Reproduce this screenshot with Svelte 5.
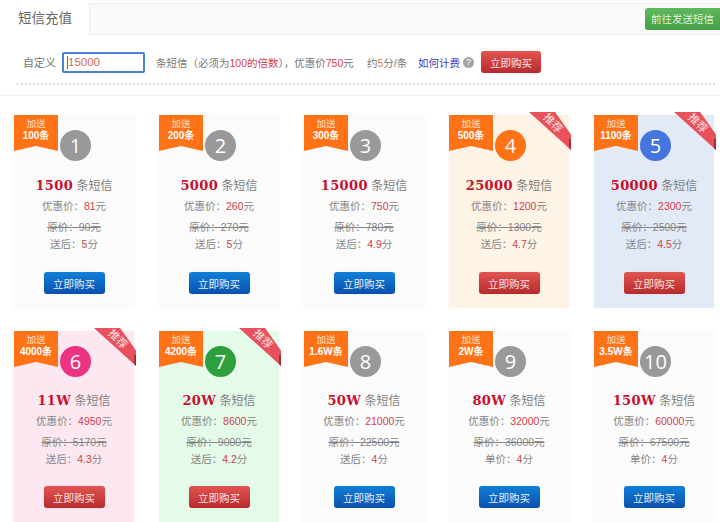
<script>
  const plans = [
    { no: 1, bonus: '100条', count: '1500', price: '81', old: '90', last: '送后', rate: '5', tone: 'plain' },
    { no: 2, bonus: '200条', count: '5000', price: '260', old: '270', last: '送后', rate: '5', tone: 'plain' },
    { no: 3, bonus: '300条', count: '15000', price: '750', old: '780', last: '送后', rate: '4.9', tone: 'plain' },
    { no: 4, bonus: '500条', count: '25000', price: '1200', old: '1300', last: '送后', rate: '4.7', tone: 'cream', hot: true },
    { no: 5, bonus: '1100条', count: '50000', price: '2300', old: '2500', last: '送后', rate: '4.5', tone: 'sky', hot: true },
    { no: 6, bonus: '4000条', count: '11W', price: '4950', old: '5170', last: '送后', rate: '4.3', tone: 'pink', hot: true },
    { no: 7, bonus: '4200条', count: '20W', price: '8600', old: '9000', last: '送后', rate: '4.2', tone: 'mint', hot: true },
    { no: 8, bonus: '1.6W条', count: '50W', price: '21000', old: '22500', last: '送后', rate: '4', tone: 'plain' },
    { no: 9, bonus: '2W条', count: '80W', price: '32000', old: '36000', last: '单价', rate: '4', tone: 'plain' },
    { no: 10, bonus: '3.5W条', count: '150W', price: '60000', old: '67500', last: '单价', rate: '4', tone: 'plain' }
  ];
</script>

<div class="page">
  <div class="tabs">
    <div class="tab">短信充值</div>
    <a class="send" href="#send">前往发送短信</a>
  </div>

  <div class="custom">
    <span class="label">自定义</span>
    <div class="input"><i class="caret"></i>15000</div>
    <span class="desc">条短信（必须为<em>100的倍数</em>），优惠价<em>750</em>元</span>
    <span class="unit">约<em class="orange">5</em>分/条</span>
    <a class="how" href="#how">如何计费</a>
    <span class="help">?</span>
    <button class="buy red top">立即购买</button>
  </div>

  <div class="grid">
    {#each plans as p}
      <div class="card {p.tone}">
        <div class="flag">
          <span>加送</span>
          <b>{p.bonus}</b>
        </div>
        <div class="num">{p.no}</div>
        {#if p.hot}
          <div class="corner"><span>推荐</span></div>
        {/if}
        <div class="title"><b>{p.count}</b> 条短信</div>
        <div class="line">优惠价：<em>{p.price}</em>元</div>
        <div class="line old">原价：{p.old}元</div>
        <div class="line after">{p.last}：<em>{p.rate}</em>分</div>
        <button class="buy" class:red={p.hot}>立即购买</button>
      </div>
    {/each}
  </div>
</div>

<style>
  :global(body) {
    background: #fff;
  }

  .page {
    width: 720px;
    height: 522px;
    overflow: hidden;
    font-family: "Liberation Sans", "Noto Sans CJK SC", sans-serif;
    color: #858585;
    font-size: 10.5px;
  }

  em {
    font-style: normal;
    color: #d2404a;
  }

  .tabs {
    margin-top: 3px;
    height: 32px;
    display: flex;
    align-items: center;
    justify-content: space-between;
    background: #fafafa;
    border-top: 1px solid #eee;
    border-bottom: 1px solid #eee;
    box-sizing: border-box;
  }

  .tab {
    width: 90px;
    height: 32px;
    box-sizing: border-box;
    padding-left: 18px;
    line-height: 32px;
    font-size: 13.5px;
    color: #666;
    background: #fff;
    border-right: 1px solid #eee;
  }

  .send {
    width: 75px;
    height: 22px;
    line-height: 22px;
    text-align: center;
    font-size: 10.5px;
    color: #dff0da;
    text-decoration: none;
    background: linear-gradient(#5fb85d, #43a045);
    border-radius: 3px 0 0 3px;
  }

  .custom {
    height: 42px;
    margin: 0 5px 0 16px;
    padding: 6px 0 0 7px;
    display: flex;
    align-items: center;
    border-bottom: 2px dotted #ddd;
    white-space: nowrap;
    color: #777;
  }

  .label {
    width: 39px;
    font-size: 11px;
  }

  .input {
    width: 83px;
    height: 21px;
    box-sizing: border-box;
    border: 2px solid #4a80d6;
    border-radius: 2px;
    padding-left: 3px;
    line-height: 18px;
    font-size: 11.5px;
    color: #d9694f;
    display: flex;
    align-items: center;
    margin-right: 11px;
  }

  .caret {
    width: 1px;
    height: 13px;
    background: #b5502f;
  }

  .desc {
    width: 211px;
  }

  .unit {
    width: 51px;
  }

  .orange {
    color: #e8813c;
  }

  .how {
    width: 45px;
    color: #3b3bb5;
    text-decoration: none;
  }

  .help {
    width: 11px;
    height: 11px;
    border-radius: 50%;
    background: #a5a5a5;
    color: #fff;
    font-size: 9px;
    line-height: 11px;
    text-align: center;
    margin-right: 7px;
  }

  .buy {
    width: 61px;
    height: 22px;
    padding: 0;
    border: 0;
    border-radius: 3px;
    font-family: inherit;
    font-size: 10.5px;
    color: #e6f0fa;
    background: linear-gradient(#1080d8, #0a50ae);
    box-shadow: 0 0 1px rgba(0, 0, 0, 0.2);
  }

  .buy.red {
    color: #fae5e2;
    background: linear-gradient(#e25450, #b82b2d);
  }

  .buy.top {
    width: 60px;
  }

  .grid {
    border-top: 1px solid #eee;
    margin-top: 10px;
    padding: 19px 0 0 14px;
    display: grid;
    grid-template-columns: repeat(5, 120px);
    column-gap: 25px;
    row-gap: 23px;
  }

  .card {
    position: relative;
    height: 193px;
    padding-top: 62px;
    box-sizing: border-box;
    display: flex;
    flex-direction: column;
    align-items: center;
    background: #fbfbfb;
    box-shadow: 0 0 2px rgba(0, 0, 0, 0.06);
  }

  .card.cream { background: #fdf4e6; }
  .card.sky { background: #e2eaf7; }
  .card.pink { background: #fde8f1; }
  .card.mint { background: #e4fbea; }

  .flag {
    position: absolute;
    left: 0;
    top: 0;
    width: 44px;
    height: 36px;
    padding-top: 3px;
    box-sizing: border-box;
    display: flex;
    flex-direction: column;
    align-items: center;
    background: #ff7216;
    color: #ffe3cc;
    font-size: 9.5px;
    line-height: 12px;
    clip-path: polygon(0 0, 100% 0, 100% 100%, 50% 86%, 0 100%);
  }

  .flag b {
    color: #fff;
    font-size: 10px;
    font-weight: 700;
    white-space: nowrap;
  }

  .num {
    position: absolute;
    left: 46px;
    top: 15px;
    width: 31px;
    height: 31px;
    border-radius: 50%;
    background: #999;
    color: #fff;
    font-family: "Open Sans", sans-serif;
    font-size: 20px;
    line-height: 31px;
    text-align: center;
  }

  .cream .num { background: #ff7216; }
  .sky .num { background: #4476dd; }
  .pink .num { background: #ec3382; }
  .mint .num { background: #2e9f3d; }

  .corner {
    position: absolute;
    right: -2px;
    top: -3px;
    width: 42px;
    height: 38px;
    background: #e8505b;
    clip-path: polygon(0 0, 62% 0, 100% 59%, 100% 100%);
  }

  .corner::after {
    content: "";
    position: absolute;
    right: 0;
    bottom: 0;
    width: 2px;
    height: 11px;
    background: #a82a33;
  }

  .corner span {
    position: absolute;
    left: 12px;
    top: 4px;
    width: 24px;
    text-align: center;
    font-size: 11px;
    line-height: 14px;
    color: #fde3e3;
    transform: rotate(45deg);
  }

  .title {
    height: 18px;
    line-height: 18px;
    font-size: 12px;
    white-space: nowrap;
    color: #7d7d7d;
  }

  .title b {
    font-family: "DejaVu Serif", serif;
    font-size: 13px;
    font-weight: 700;
    letter-spacing: 0.4px;
    color: #c8102e;
  }

  .line {
    height: 14px;
    line-height: 14px;
    white-space: nowrap;
    margin-top: 4px;
  }

  .old {
    text-decoration: line-through;
    margin-top: 7px;
  }

  .after {
    margin-top: 3px;
  }

  .card .buy {
    margin-top: 21px;
  }

  /* second row sits a touch tighter than the first */
  .card:nth-child(n + 6) .title {
    margin-top: -1px;
  }

  .card:nth-child(n + 6) .buy {
    margin-top: 20px;
  }
</style>
